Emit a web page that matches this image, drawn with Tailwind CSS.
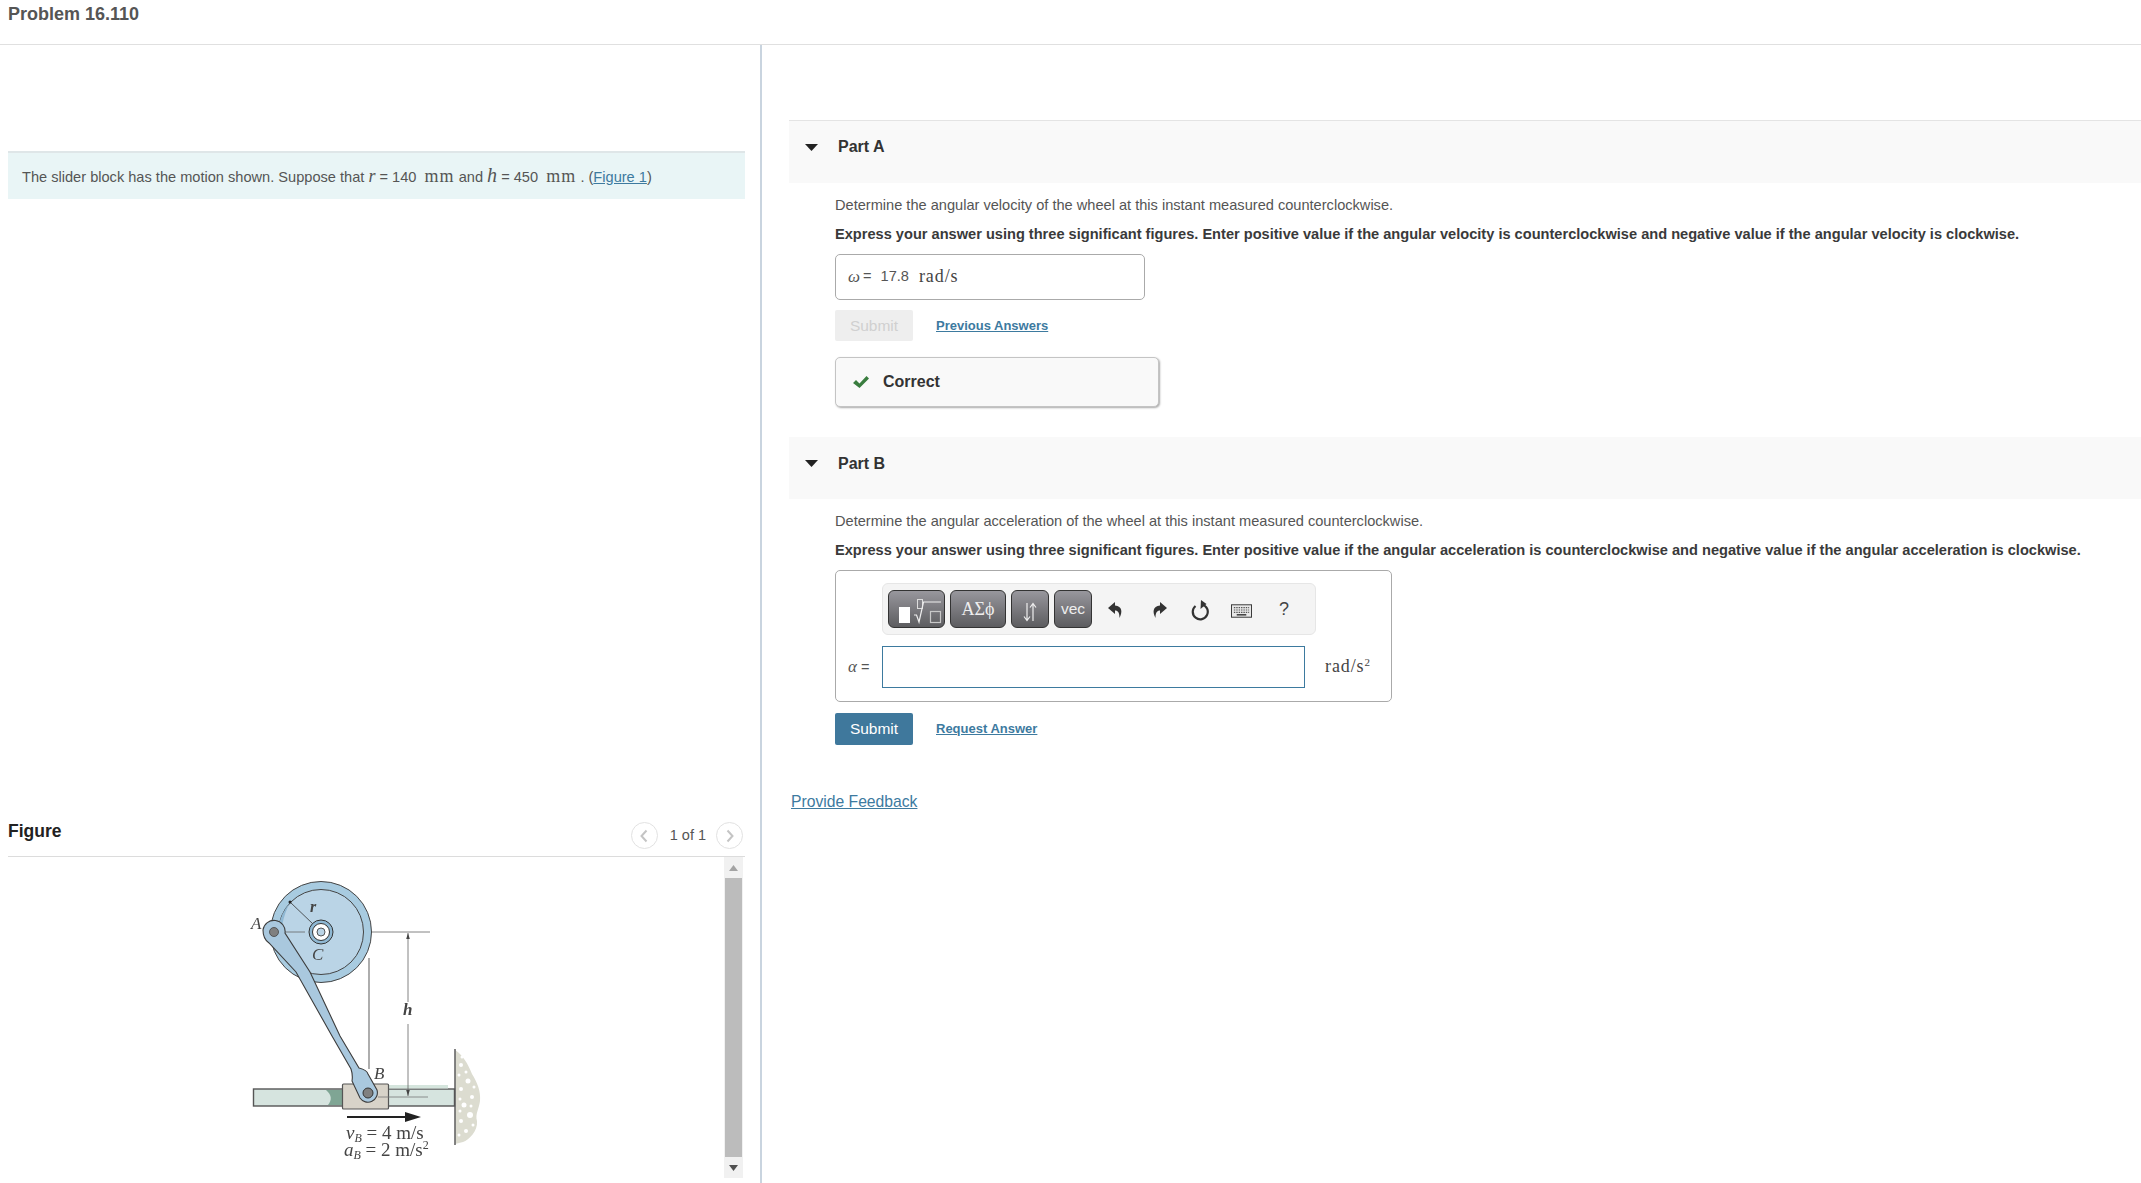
<!DOCTYPE html>
<html lang="en">
<head>
    <meta charset="UTF-8">
    <meta name="viewport" content="width=device-width, initial-scale=1.0">
    <title>Problem 16.110</title>
    <script src="https://cdn.jsdelivr.net/npm/@tailwindcss/browser@4"></script>
</head>
<body class="bg-white h-[1183px] overflow-hidden font-['Liberation_Sans',Arial,sans-serif] text-[#555]">
    <!-- Title bar -->
    <header class="h-[45px] border-b border-[#e0e0e0] pl-2 pt-[3px]">
        <h1 class="text-[18px] leading-[22px] font-bold text-[#555]">Problem 16.110</h1>
    </header>

    <main class="flex h-[1138px]">
        <!-- Left column -->
        <aside class="w-[762px] shrink-0 border-r-2 border-[#c9d4df] pl-2 pr-[15px] flex flex-col">
            <div class="mt-[106px] h-[48px] shrink-0 border-t-2 border-[#dfe6e8] bg-[#e9f5f6] pl-[14px] pb-[2px] flex items-center text-[14.6px]">
                <p class="whitespace-nowrap">The slider block has the motion shown. Suppose that <i class="font-['Liberation_Serif',serif] text-[18px]">r</i> = 140 <span class="font-['Liberation_Serif',serif] text-[18px] tracking-[0.06em] ml-[4px]">mm</span> and <i class="font-['Liberation_Serif',serif] text-[20px]">h</i> = 450 <span class="font-['Liberation_Serif',serif] text-[18px] tracking-[0.06em] ml-[4px]">mm</span> . (<a href="#" class="text-[#3d7a9f] underline">Figure 1</a>)</p>
            </div>

            <!-- Figure -->
            <div class="mt-[616px] h-[42px] shrink-0 border-b border-[#dcdcdc] flex items-center justify-between">
                <h2 class="text-[17.5px] font-bold text-[#222] -mt-[8px]">Figure</h2>
                <div class="flex items-center text-[14.5px] text-[#555] mr-[2px]">
                    <span class="w-[27px] h-[27px] rounded-full border border-[#e2e2e2] flex items-center justify-center">
                        <svg width="10" height="14" viewBox="0 0 10 14" fill="none" stroke="#c4c4c4" stroke-width="2"><path d="M7.5 1.5 2.5 7l5 5.5"/></svg>
                    </span>
                    <span class="ml-[12px] mr-[10px]">1 of 1</span>
                    <span class="w-[27px] h-[27px] rounded-full border border-[#e2e2e2] flex items-center justify-center">
                        <svg width="10" height="14" viewBox="0 0 10 14" fill="none" stroke="#c4c4c4" stroke-width="2"><path d="M2.5 1.5 7.5 7l-5 5.5"/></svg>
                    </span>
                </div>
            </div>
            <div class="flex flex-1 min-h-0">
                <svg class="flex-1 min-w-0 blur-[0.3px]" viewBox="8 858 716 325" width="716" height="325" preserveAspectRatio="xMinYMin meet">
                    <!-- wall -->
                    <path d="M455 1051c8 5 13 14 17 24 5 8 9 17 8 27-1 8-5 13-3 20 1 10-8 19-14 21l-8 2z" fill="#dcdcd0"/>
                    <g fill="#fff">
                        <circle cx="461" cy="1066" r="2"/><circle cx="468" cy="1082" r="2.5"/><circle cx="461" cy="1090" r="2"/>
                        <circle cx="472" cy="1098" r="2"/><circle cx="464" cy="1106" r="2.5"/><circle cx="470" cy="1116" r="3"/>
                        <circle cx="461" cy="1122" r="2"/><circle cx="466" cy="1132" r="2"/><circle cx="459" cy="1076" r="1.5"/>
                        <circle cx="466" cy="1073" r="1.5"/><circle cx="474" cy="1088" r="1.5"/><circle cx="460" cy="1100" r="1.5"/>
                        <circle cx="471" cy="1107" r="1.5"/><circle cx="460" cy="1112" r="1.5"/><circle cx="473" cy="1126" r="1.5"/>
                        <circle cx="459" cy="1136" r="1.5"/><circle cx="462" cy="1058" r="1.5"/>
                    </g>
                    <line x1="455" y1="1050" x2="455" y2="1146" stroke="#666" stroke-width="1.6"/>
                    <!-- rod -->
                    <rect x="253.5" y="1090" width="201" height="17" fill="#d6e4df" stroke="#555" stroke-width="1.4"/>
                    <path d="M326 1091c6 5 6 10 2 15h14v-15z" fill="#7fa594"/>
                    <rect x="388" y="1086" width="60" height="3.500" fill="#d5e5dd"/>
                    <rect x="342.500" y="1085" width="46" height="25" rx="1" fill="#d8d3c9" stroke="#555" stroke-width="1.2"/>
                    <!-- dimensions -->
                    <line x1="369" y1="959" x2="369" y2="1070" stroke="#777" stroke-width="1.2"/>
                    <line x1="340" y1="933" x2="430" y2="933" stroke="#666" stroke-width="0.8"/>
                    <line x1="408" y1="934" x2="408" y2="1003" stroke="#666" stroke-width="0.8"/>
                    <line x1="408" y1="1025" x2="408" y2="1097" stroke="#666" stroke-width="0.8"/>
                    <path d="m408 934 1.800 6h-3.600zM408 1097l1.800-6h-3.600z" fill="#444"/>
                    <line x1="378" y1="1098" x2="428" y2="1098" stroke="#777" stroke-width="0.8"/>
                    <!-- wheel -->
                    <circle cx="321" cy="933" r="50.500" fill="#a8cbe0" stroke="#444" stroke-width="1"/>
                    <circle cx="321" cy="933" r="42.500" fill="#bad4e6" stroke="#444" stroke-width="1"/>
                    <path d="M290 904a42.500 42.500 0 0 0-7 48c-4-18 0-36 7-48z" fill="#8fb8d3"/>
                    <line x1="290" y1="903" x2="313" y2="925" stroke="#333" stroke-width="0.8"/>
                    <circle cx="290" cy="903" r="1.500" fill="#222"/>
                    <line x1="285" y1="933" x2="305" y2="933" stroke="#666" stroke-width="0.8"/>
                    <circle cx="321" cy="933" r="12" fill="#8fb8d3" stroke="#333" stroke-width="1"/>
                    <circle cx="321" cy="933" r="8.500" fill="#fff" stroke="#333" stroke-width="1"/>
                    <circle cx="321" cy="933" r="4" fill="#bad4e6" stroke="#555" stroke-width="1"/>
                    <!-- connecting link -->
                    <path d="M263 931a11 11 0 0 1 22 3L310 973 340 1037 359 1069Q367 1071 368 1075L377 1091A9.500 9.500 0 0 1 360 1099L352 1082Q353 1076 351 1070L332 1037 296 973 269 944Q263 940 263 931z" fill="#a9c8de" stroke="#3c3c3c" stroke-width="1.100"/>
                    <circle cx="274" cy="933" r="4.500" fill="#808080" stroke="#444" stroke-width="0.8"/>
                    <circle cx="368" cy="1094" r="5" fill="#808080" stroke="#333" stroke-width="1"/>
                    <!-- velocity arrow -->
                    <path d="M347 1117h58v-4l16 5-16 5v-4h-58z" fill="#222"/>
                    <!-- labels -->
                    <g font-family="'Liberation Serif', serif" fill="#444">
                        <text x="251" y="930" font-size="17" font-style="italic">A</text>
                        <text x="310" y="913" font-size="16" font-style="italic" font-weight="bold">r</text>
                        <text x="312" y="961" font-size="17" font-style="italic">C</text>
                        <text x="403" y="1016" font-size="17" font-style="italic" font-weight="bold">h</text>
                        <text x="374" y="1080" font-size="17" font-style="italic">B</text>
                        <text x="346" y="1140" font-size="19"><tspan font-style="italic">v</tspan><tspan font-style="italic" font-size="12" dy="3">B</tspan><tspan dy="-3"> = 4 m/s</tspan></text>
                        <text x="344" y="1157" font-size="19"><tspan font-style="italic">a</tspan><tspan font-style="italic" font-size="12" dy="3">B</tspan><tspan dy="-3"> = 2 m/s</tspan><tspan font-size="12" dy="-7">2</tspan></text>
                    </g>
                </svg>
                <!-- Scrollbar -->
                <div class="w-[19px] mr-[2px] mb-[5px] shrink-0 bg-[#f1f1f1] flex flex-col items-center">
                    <div class="h-[21px] w-full flex items-center justify-center">
                        <svg width="9" height="6" viewBox="0 0 9 6"><path d="M4.500 0 9 6H0z" fill="#a3a3a3"/></svg>
                    </div>
                    <div class="flex-1 w-[17px] bg-[#bcbcbc]"></div>
                    <div class="h-[21px] w-full flex items-center justify-center">
                        <svg width="9" height="6" viewBox="0 0 9 6"><path d="M0 0h9L4.500 6z" fill="#505050"/></svg>
                    </div>
                </div>
            </div>
        </aside>

        <!-- Right column -->
        <section class="flex-1 pl-[27px] pt-[75px] text-[14.6px]">
            <!-- Part A -->
            <div class="h-[63px] border-t border-[#e4e4e4] bg-[#f9f9f9] flex items-start pt-[15px] pl-[16px]">
                <svg class="mt-[8px]" width="13" height="7" viewBox="0 0 13 7"><path d="M0 0h13L6.500 7z" fill="#222"/></svg>
                <span class="ml-[20px] text-[16px] leading-[22px] font-bold text-[#333]">Part A</span>
            </div>
            <div class="pl-[46px]">
                <p class="mt-[12px] leading-[20px]">Determine the angular velocity of the wheel at this instant measured counterclockwise.</p>
                <p class="mt-[9px] leading-[20px] font-bold text-[#3a3a3a] whitespace-nowrap">Express your answer using three significant figures. Enter positive value if the angular velocity is counterclockwise and negative value if the angular velocity is clockwise.</p>
                <div class="mt-[10px] w-[310px] h-[46px] border border-[#aaa] rounded-[5px] flex items-center pl-[12px]">
                    <i class="font-['Liberation_Serif',serif] text-[17px]">ω</i>
                    <span class="ml-[3px]">=</span>
                    <span class="ml-[9px]">17.8</span>
                    <span class="ml-[10px] -mt-[2px] font-['Liberation_Serif',serif] text-[18px] tracking-[0.05em] text-[#444]">rad/s</span>
                </div>
                <div class="mt-[10px] flex items-center">
                    <button class="w-[78px] h-[31px] bg-[#eee] rounded-[2px] text-[#d0d0d0] text-[15.500px]">Submit</button>
                    <a href="#" class="ml-[23px] text-[13px] font-bold text-[#3d7a9f] underline">Previous Answers</a>
                </div>
                <div class="mt-[16px] w-[324px] h-[50px] border border-[#c4c4c4] rounded-[5px] bg-[#f9f9f9] shadow-[1px_1px_2px_#aaa] flex items-center pl-[16px]">
                    <svg width="18" height="14" viewBox="0 0 18 14"><path d="M1 8l3-3 3.500 3.500L14.500 1 17 3.500 7.500 13z" fill="#3a7d3f"/></svg>
                    <span class="ml-[13px] text-[16px] font-bold text-[#333]">Correct</span>
                </div>
            </div>

            <!-- Part B -->
            <div class="mt-[30px] h-[62px] bg-[#f9f9f9] flex items-start pt-[16px] pl-[16px]">
                <svg class="mt-[7px]" width="13" height="7" viewBox="0 0 13 7"><path d="M0 0h13L6.500 7z" fill="#222"/></svg>
                <span class="ml-[20px] text-[16px] leading-[22px] font-bold text-[#333]">Part B</span>
            </div>
            <div class="pl-[46px]">
                <p class="mt-[12px] leading-[20px]">Determine the angular acceleration of the wheel at this instant measured counterclockwise.</p>
                <p class="mt-[9px] leading-[20px] font-bold text-[#3a3a3a] whitespace-nowrap">Express your answer using three significant figures. Enter positive value if the angular acceleration is counterclockwise and negative value if the angular acceleration is clockwise.</p>
                <div class="mt-[10px] w-[557px] h-[132px] border border-[#aaa] rounded-[5px] pt-[12px]">
                    <!-- Equation toolbar -->
                    <div class="ml-[46px] w-[434px] h-[52px] bg-[#f4f4f4] border border-[#e6e6e6] rounded-[6px] flex items-center pl-[5px]">
                        <button class="w-[57px] h-[38px] rounded-[6px] border border-[#333] bg-linear-to-b from-[#98979d] to-[#5d5d60] flex items-center justify-center">
                            <svg width="50" height="32" viewBox="0 0 50 32" fill="none">
                                <rect x="7" y="14" width="11" height="16" fill="#fff"/>
                                <rect x="25.500" y="6.500" width="5" height="9" stroke="#ddd" stroke-width="1"/>
                                <path d="M22 22h2.500l2.500 7L31.500 9H49" stroke="#eee" stroke-width="1.200"/>
                                <rect x="38.500" y="18.500" width="10" height="11" stroke="#c8c8c8" stroke-width="1.200"/>
                            </svg>
                        </button>
                        <button class="ml-[5px] w-[56px] h-[38px] rounded-[6px] border border-[#333] bg-linear-to-b from-[#98979d] to-[#5d5d60] font-['Liberation_Serif',serif] text-[18px] text-[#eee]">ΑΣϕ</button>
                        <button class="ml-[5px] w-[38px] h-[38px] rounded-[6px] border border-[#333] bg-linear-to-b from-[#98979d] to-[#5d5d60] flex items-center justify-center">
                            <svg class="mt-[5px]" width="16" height="20" viewBox="0 0 16 20" fill="none" stroke="#eee" stroke-width="1.200"><path d="M5 1v17M2 14.500 5 18.500l3-4M11 19V2M8 5.500 11 1.500l3 4"/></svg>
                        </button>
                        <button class="ml-[5px] w-[38px] h-[38px] rounded-[6px] border border-[#333] bg-linear-to-b from-[#98979d] to-[#5d5d60] text-[15.500px] text-[#eee]">vec</button>
                        <div class="ml-[13px] mt-[1px] w-[21px] flex justify-center">
                            <svg width="18" height="18" viewBox="0 0 18 18"><path d="M8 1 1 7l7 6V9.500c3 0 4.500 2 4.500 7.500 3-6 3-11.500-4.500-12.500z" fill="#333"/></svg>
                        </div>
                        <div class="ml-[22px] mt-[1px] w-[21px] flex justify-center">
                            <svg width="18" height="18" viewBox="0 0 18 18"><path d="M10 1l7 6-7 6V9.500c-3 0-4.500 2-4.500 7.500-3-6-3-11.500 4.500-12.500z" fill="#333"/></svg>
                        </div>
                        <div class="ml-[20px] mt-[1px] w-[21px] flex justify-center">
                            <svg width="20" height="22" viewBox="0 0 20 22" fill="none"><path d="M5.500 7a7.500 7.500 0 1 0 6.500-1.500" stroke="#333" stroke-width="2.200"/><path d="M11 1l-.5 9 6-5z" fill="#333"/></svg>
                        </div>
                        <div class="ml-[21px] mt-[1px] w-[21px] flex justify-center">
                            <svg class="mt-[3px]" width="22" height="14" viewBox="0 0 22 14" fill="none">
                                <rect x="0.500" y="0.500" width="21" height="13" fill="#e8e8e8" stroke="#333"/>
                                <path d="M3 3.500h16M3 6h16M3 8.500h16" stroke="#555" stroke-width="1.200" stroke-dasharray="1.500 1"/>
                                <path d="M6 11h10" stroke="#333" stroke-width="1.500"/>
                            </svg>
                        </div>
                        <span class="ml-[22px] mt-[1px] w-[20px] text-center text-[18px] text-[#444]">?</span>
                    </div>
                    <!-- Answer row -->
                    <div class="mt-[11px] flex items-center">
                        <span class="w-[46px] pl-[12px] whitespace-nowrap"><i class="font-['Liberation_Serif',serif] text-[17px]">α</i> =</span>
                        <div class="w-[423px] h-[42px] border border-[#3d7a9f]"></div>
                        <span class="ml-[20px] -mt-[2px] font-['Liberation_Serif',serif] text-[18px] tracking-[0.05em] text-[#444]">rad/s<sup class="text-[11px]">2</sup></span>
                    </div>
                </div>
                <div class="mt-[11px] flex items-center">
                    <button class="w-[78px] h-[32px] bg-[#3f789c] rounded-[2px] text-white text-[15.500px]">Submit</button>
                    <a href="#" class="ml-[23px] text-[13px] font-bold text-[#3d7a9f] underline">Request Answer</a>
                </div>
            </div>
            <a href="#" class="block mt-[47px] ml-[2px] leading-[20px] text-[15.700px] text-[#3d7a9f] underline">Provide Feedback</a>
        </section>
    </main>
</body>
</html>
